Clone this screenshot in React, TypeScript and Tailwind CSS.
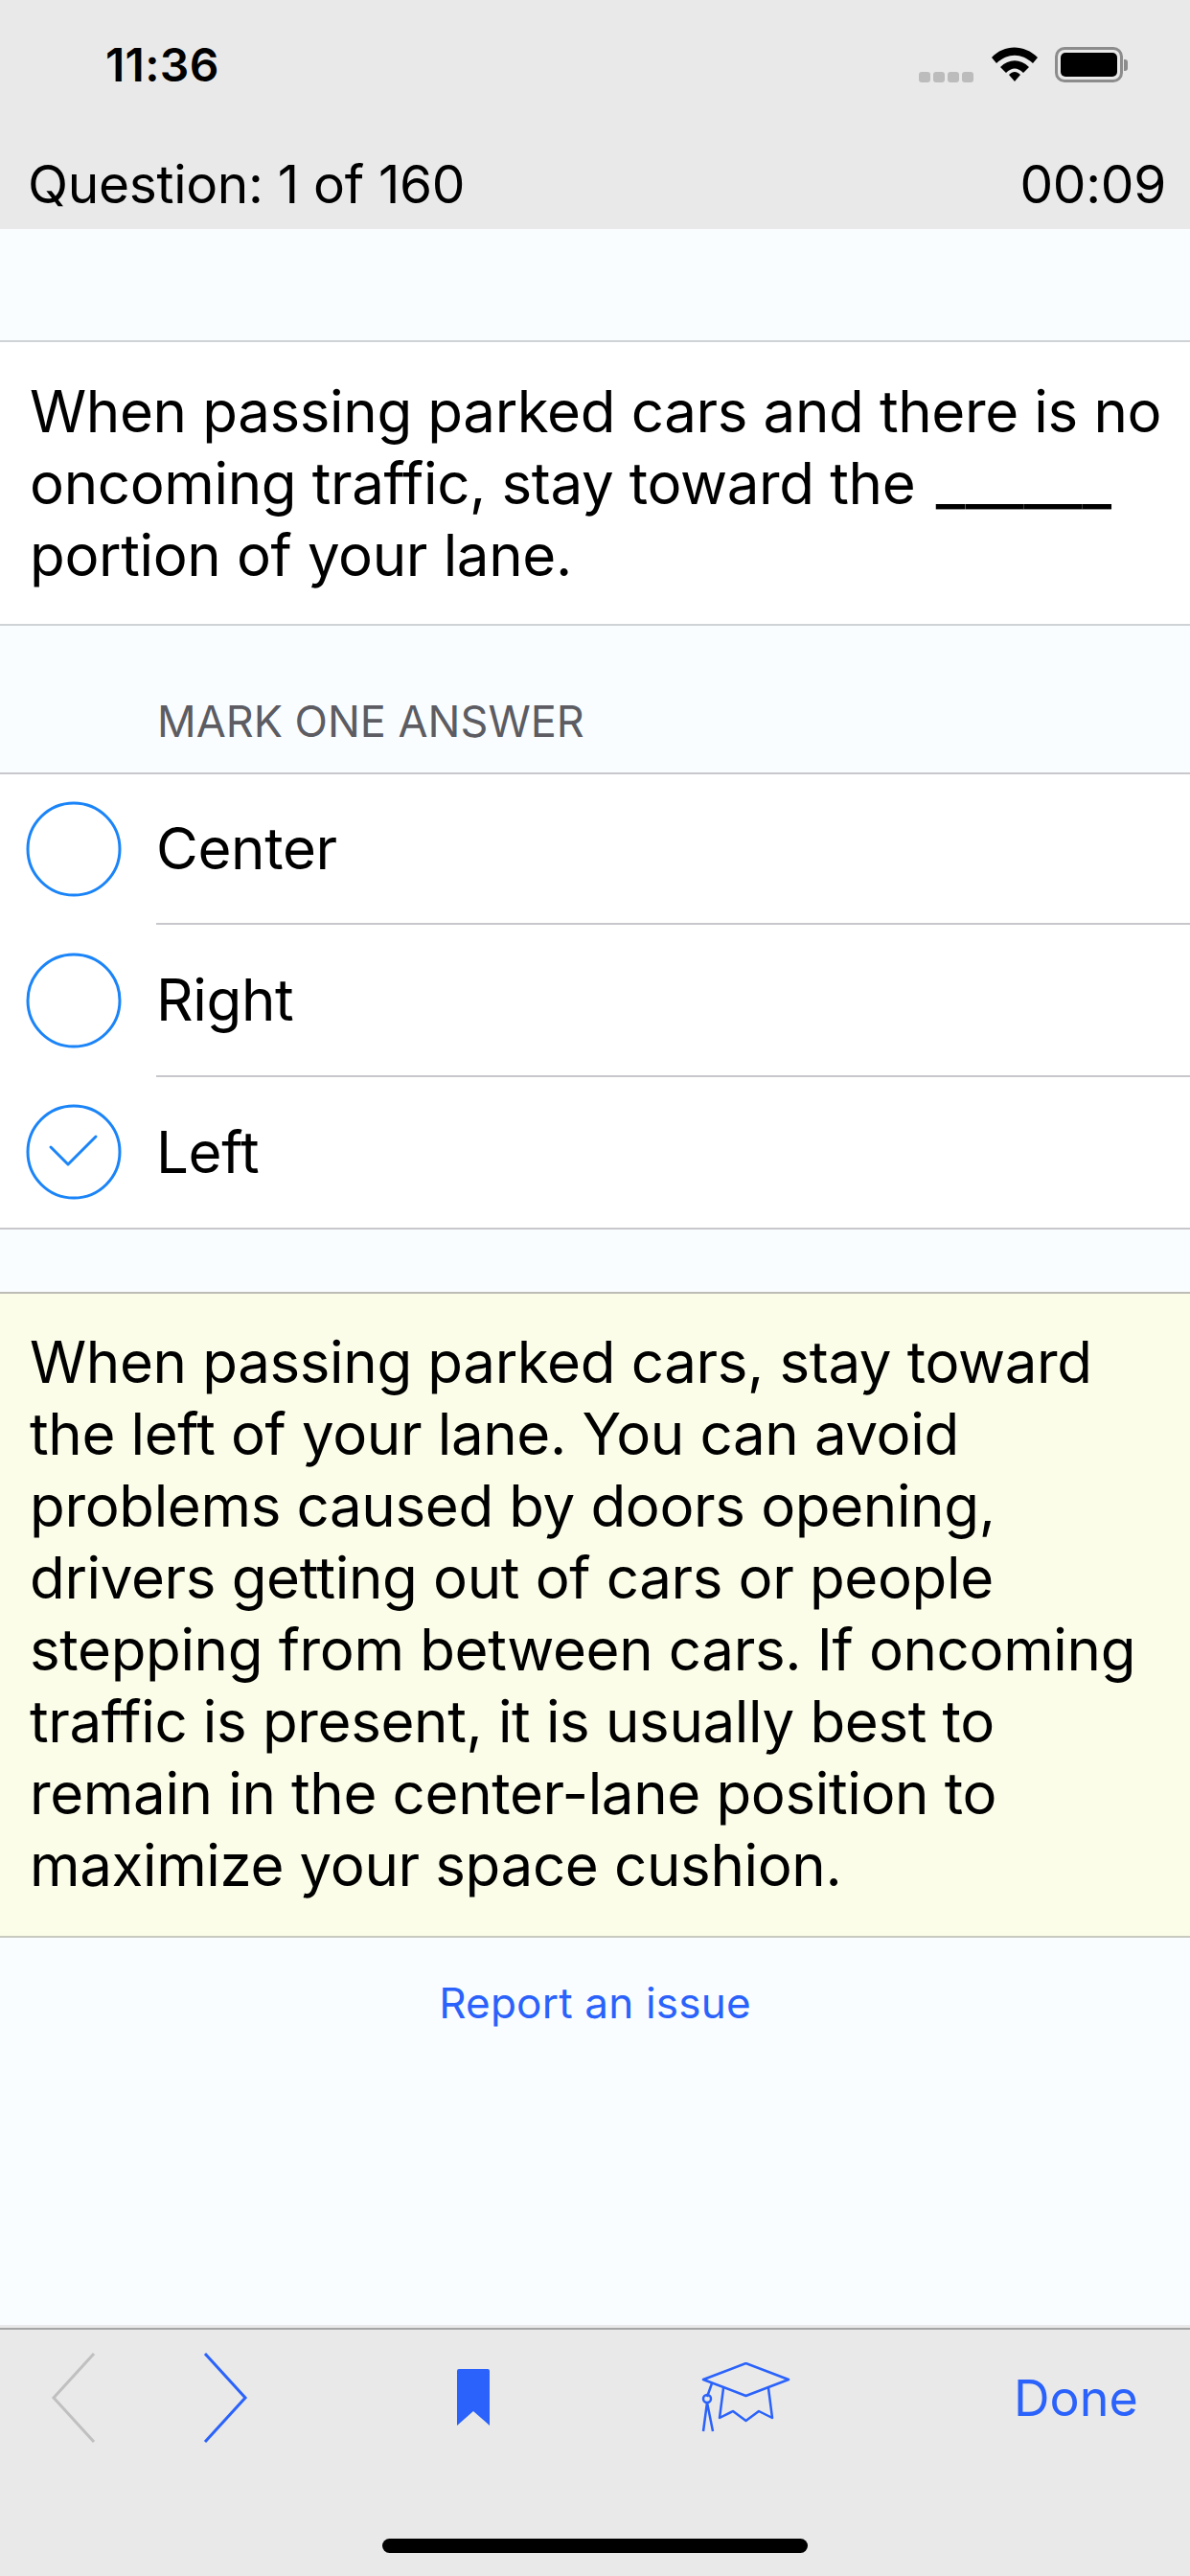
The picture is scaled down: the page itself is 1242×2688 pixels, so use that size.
const font = { fontFamily: "Inter, 'Liberation Sans', sans-serif" };

function Radio({ checked }: { checked?: boolean }) {
  return (
    <svg width="100" height="100" viewBox="0 0 100 100" className="mb-[2px] shrink-0">
      <circle cx="50" cy="50" r="48" fill="none" stroke="#1a84f8" strokeWidth="3" />
      {checked && <path d="M26 45 L44 63 L73 34" fill="none" stroke="#1a84f8" strokeWidth="3" strokeLinecap="round" strokeLinejoin="round" />}
    </svg>
  );
}

function Row({ label, checked, last, heightClass }: { label: string; checked?: boolean; last?: boolean; heightClass: string }) {
  return (
    <div className={`flex items-center pl-[27px] ${heightClass}`}>
      <Radio checked={checked} />
      <div className={`ml-[36px] flex h-full flex-1 items-center pb-[2px] text-[60px] tracking-[-0.35px] text-black ${last ? "" : "border-b-2 border-[#c8c8cc]"}`}>{label}</div>
    </div>
  );
}

export default function App() {
  return (
    <div className="flex h-[2688px] w-[1242px] flex-col overflow-hidden bg-[#f9fdff]" style={font}>
      <div className="h-[239px] bg-[#e9e9e9] px-[28px]">
        <div className="flex h-[159px] items-start justify-between">
          <div className="ml-[82px] mt-[40px] text-[48px] font-semibold leading-[56px] tracking-[0.3px] text-black">11:36</div>
          <div className="mr-[37px] mt-[49px] flex items-start">
            <div className="mr-[19px] mt-[26px] flex gap-[3px]">
              <span className="h-[11px] w-[12px] rounded-[3px] bg-[#bcbcbc]" />
              <span className="h-[11px] w-[12px] rounded-[3px] bg-[#bcbcbc]" />
              <span className="h-[11px] w-[12px] rounded-[3px] bg-[#bcbcbc]" />
              <span className="h-[11px] w-[12px] rounded-[3px] bg-[#bcbcbc]" />
            </div>
            <svg width="48" height="36" viewBox="0 0 48 36" className="mr-[18px]">
              <path d="M0 11 C13 -3 34 -3 48 11 L43 17 C31 6 17 6 5 17 Z" fill="#000" />
              <path d="M9 21 C18 12 30 12 39 21 L33 27 C27 21 21 21 15 27 Z" fill="#000" />
              <path d="M18 29 C22 25 26 25 30 29 L24 36 Z" fill="#000" />
            </svg>
            <div className="flex items-center">
              <div className="flex h-[37px] w-[71px] rounded-[10px] border-[3px] border-[#8c8c8c] p-[3px]">
                <div className="flex-1 rounded-[5px] bg-black" />
              </div>
              <div className="ml-[1px] h-[12px] w-[4px] rounded-r-[3px] bg-[#8c8c8c]" />
            </div>
          </div>
        </div>
        <div className="flex items-center justify-between text-[55px] leading-[66px] tracking-[-0.3px] text-black">
          <span className="ml-[1px]">Question: 1 of 160</span>
          <span className="mr-[-3px]">00:09</span>
        </div>
      </div>

      <div className="h-[118px] border-b-2 border-[#d0d3d6]" />

      <div className="border-b-2 border-[#d0d3d6] bg-white pb-[34px] pl-[31px] pr-[20px] pt-[35px] text-[60px] leading-[75px] tracking-[-0.35px] text-black">
        When passing parked cars and there is no oncoming traffic, stay toward the <span className="ml-[5px] text-[67px] leading-[50px] tracking-[0px]">______</span> portion of your lane.
      </div>

      <div className="flex h-[153px] items-end pb-[29px] pl-[164px] text-[45px] leading-[48px] text-[#5c5c62]">MARK ONE ANSWER</div>

      <div className="border-y-2 border-[#c8c8cc] bg-white">
        <Row label="Center" heightClass="h-[157px]" />
        <Row label="Right" heightClass="h-[159px]" />
        <Row label="Left" checked last heightClass="h-[157px]" />
      </div>

      <div className="h-[65px]" />

      <div className="h-[674px] border-y-2 border-b-[#c8c9bf] border-t-[#bdbdb6] bg-[#fbfde8] px-[31px] pt-[34px] text-[60px] leading-[75px] tracking-[-0.35px] text-black">
        When passing parked cars, stay toward the left of your lane. You can avoid problems caused by doors opening, drivers getting out of cars or people stepping from between cars. If oncoming traffic is present, it is usually best to remain in the center-lane position to maximize your space cushion.
      </div>

      <div className="flex h-[135px] justify-center pt-[42px] text-[44px] leading-[52px] tracking-[0.2px] text-[#2a62fb]">Report an issue</div>

      <div className="flex-1" />

      <div className="h-[262px] bg-[#e9e9e9] pt-[3px]">
        <div className="h-[2px] bg-[#a5a5a5]" />
        <div className="flex h-[218px] items-start pt-[24px]">
          <svg width="47" height="94" viewBox="0 0 47 94" className="ml-[53px]">
            <path d="M45 1 L3 47 L45 93" fill="none" stroke="#c0c0c0" strokeWidth="3" />
          </svg>
          <svg width="47" height="94" viewBox="0 0 47 94" className="ml-[112px]">
            <path d="M2 1 L44 47 L2 93" fill="none" stroke="#2a62fb" strokeWidth="3" />
          </svg>
          <svg width="34" height="59" viewBox="0 0 34 59" className="ml-[218px] mt-[17px]">
            <path d="M0 2 Q0 0 2 0 L32 0 Q34 0 34 2 L34 59 L17 44 L0 59 Z" fill="#2a62fb" />
          </svg>
          <svg width="93" height="74" viewBox="0 0 93 74" className="ml-[221px] mt-[10px]" fill="none" stroke="#2a62fb" strokeWidth="2.5" strokeLinejoin="round">
            <path d="M46.5 1 L91 18 L46.5 35 L2 18 Z" />
            <path d="M23 27 L19 58 L33 51 L46.5 61 L60 51 L74 58 L70 27" />
            <path d="M11 22 L6 36" />
            <circle cx="6" cy="38" r="4" />
            <path d="M6 42 L2 72 M6 42 L12 72" />
          </svg>
          <div className="ml-[233px] mt-[18px] text-[52px] leading-[60px] text-[#2a62fb]">Done</div>
        </div>
        <div className="mx-auto h-[15px] w-[444px] rounded-full bg-black" />
      </div>
    </div>
  );
}
